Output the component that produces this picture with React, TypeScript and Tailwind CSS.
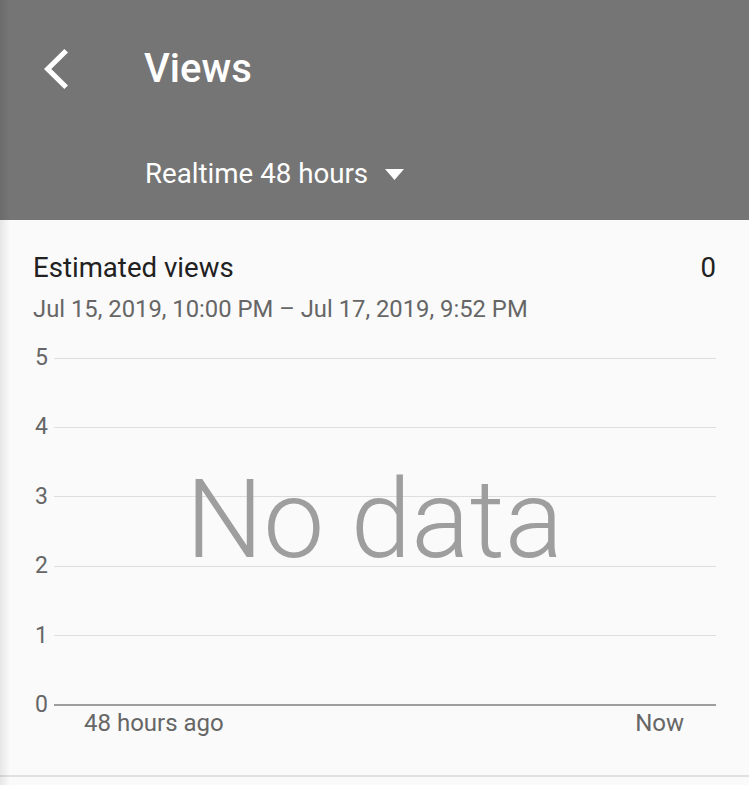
import React from "react";

const yLabels = ["5", "4", "3", "2", "1", "0"];

export default function App() {
  return (
    <div
      className="relative w-[749px] h-[785px] overflow-hidden bg-[#fafafa]"
      style={{ fontFamily: "Roboto, 'Noto Sans', sans-serif" }}
    >
      {/* Header */}
      <div className="h-[220px] bg-[#757575] flex flex-col text-white">
        <div className="h-[138px] flex items-center pl-[44px]">
          <svg width="24" height="40" viewBox="0 2.1 11.67 19.8" preserveAspectRatio="none" fill="#ffffff">
            <path d="M11.67 3.87L9.9 2.1 0 12l9.9 9.9 1.77-1.77L3.54 12z" />
          </svg>
          <div className="ml-[76px] text-[40px] leading-none font-medium">Views</div>
        </div>
        <div className="h-[72px] flex items-center pl-[145px]">
          <span className="text-[27.7px] leading-none">Realtime 48 hours</span>
          <svg className="ml-[17px]" width="19" height="11" viewBox="0 0 19 11" fill="#ffffff">
            <path d="M0 0h19L9.5 11z" />
          </svg>
        </div>
      </div>

      {/* Card */}
      <div className="px-[33px] pt-[32px]">
        <div className="flex justify-between text-[27.6px] leading-[32px] text-[#212121]">
          <span>Estimated views</span>
          <span>0</span>
        </div>
        <div className="mt-[11px] text-[23.8px] leading-[28px] text-[#666666]">
          Jul 15, 2019, 10:00 PM – Jul 17, 2019, 9:52 PM
        </div>

        <div className="relative mt-[25px]">
          <div className="flex flex-col gap-[49.4px]">
            {yLabels.map((l) => (
              <div key={l} className="h-[20px] flex items-center">
                <span className="w-[21px] pl-[2px] text-[23px] leading-[20px] text-[#666666]">{l}</span>
                <div
                  className={
                    l === "0" ? "flex-1 h-[2px] bg-[#9e9e9e]" : "flex-1 h-px bg-[#dedede]"
                  }
                />
              </div>
            ))}
          </div>
          <div className="-mt-[2px] flex justify-between ml-[51px] mr-[32px] text-[24px] leading-[20px] text-[#666666]">
            <span>48 hours ago</span>
            <span>Now</span>
          </div>
          <div className="absolute left-0 right-0 top-[118px] text-center text-[109px] leading-none font-light text-[#9e9e9e]">
            No data
          </div>
        </div>
      </div>
      <div className="mt-[42px] h-[2px] bg-[#e0e0e0]" />

      {/* left edge shadow */}
      <div className="absolute left-0 top-0 bottom-0 w-[10px] bg-gradient-to-r from-black/[0.08] to-transparent pointer-events-none" />
    </div>
  );
}
